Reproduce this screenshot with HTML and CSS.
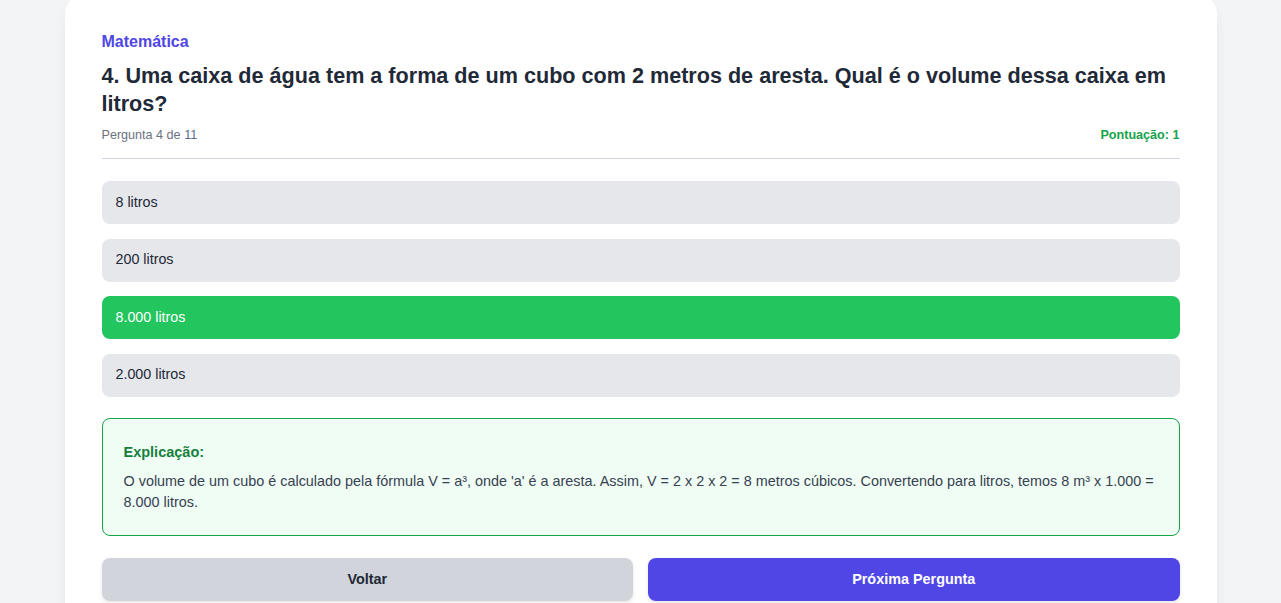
FILE: index.html
```html
<!DOCTYPE html>
<html lang="pt">
<head>
<meta charset="utf-8">
<title>Quiz</title>
<link rel="stylesheet" href="styles.css">
</head>
<body>
<main class="page">
  <section class="card">
    <div class="subject">Matemática</div>
    <h1 class="question">4. Uma caixa de água tem a forma de um cubo com 2 metros de aresta. Qual é o volume dessa caixa em litros?</h1>
    <div class="meta">
      <span class="progress">Pergunta 4 de <span class="total">11</span></span>
      <span class="score">Pontuação: 1</span>
    </div>
    <div class="options">
      <button class="option">8 litros</button>
      <button class="option">200 litros</button>
      <button class="option option-correct">8.000 litros</button>
      <button class="option">2.000 litros</button>
    </div>
    <div class="explanation">
      <h2 class="explanation-title">Explicação:</h2>
      <p class="explanation-text">O volume de um cubo é calculado pela fórmula V = a³, onde 'a' é a aresta. Assim, V = 2 x 2 x 2 = 8 metros cúbicos. Convertendo para litros, temos 8 m³ x 1.000 = 8.000 litros.</p>
    </div>
    <div class="actions">
      <button class="btn btn-back">Voltar</button>
      <button class="btn btn-next">Próxima Pergunta</button>
    </div>
  </section>
</main>
</body>
</html>
```

FILE: styles.css
```css
* { box-sizing: border-box; }
html, body { margin: 0; padding: 0; }
body {
  background: #f3f4f6;
  font-family: "Liberation Sans", Arial, sans-serif;
  color: #1f2937;
  overflow: hidden;
}
.page {
  display: flex;
  justify-content: center;
}
.card {
  width: 1152px;
  margin-top: -6px;
  background: #ffffff;
  border-radius: 20px;
  box-shadow: 0 10px 15px -3px rgba(0,0,0,0.08), 0 4px 6px -4px rgba(0,0,0,0.08);
  padding: 36px 37px 40px 37px;
  min-height: 700px;
}
.subject {
  font-size: 16px;
  line-height: 24px;
  font-weight: 700;
  color: #4f46e5;
}
.question {
  margin: 8px 0 0 0;
  font-size: 21.6px;
  line-height: 28px;
  font-weight: 700;
  color: #1f2937;
}
.meta {
  margin-top: 7px;
  display: flex;
  justify-content: space-between;
  align-items: center;
  font-size: 12.6px;
  line-height: 20px;
  padding-bottom: 13px;
  border-bottom: 1px solid #d1d5db;
}
.progress { color: #6b7280; }
.total { color: #5b6b8c; }
.score { color: #16a34a; font-weight: 700; }
.options {
  margin-top: 22px;
  display: flex;
  flex-direction: column;
  gap: 14.6px;
}
.option {
  display: block;
  width: 100%;
  height: 43px;
  border: none;
  border-radius: 8px;
  background: #e5e7eb;
  color: #1f2937;
  font-family: inherit;
  font-size: 14.3px;
  text-align: left;
  padding: 0 14px 2px 14px;
}
.option-correct {
  background: #22c55e;
  color: #ffffff;
}
.explanation {
  margin-top: 21.5px;
  border: 1px solid #16a34a;
  border-radius: 8px;
  background: #f0fdf4;
  padding: 21px 21px 22px 21px;
}
.explanation-title {
  margin: 0 0 7px 0;
  font-size: 14.5px;
  line-height: 24px;
  font-weight: 700;
  color: #15803d;
}
.explanation-text {
  margin: 0;
  font-size: 14.4px;
  line-height: 21px;
  color: #374151;
}
.actions {
  margin-top: 21.5px;
  display: flex;
  gap: 15px;
}
.btn {
  flex: 1;
  height: 43px;
  border: none;
  border-radius: 8px;
  font-family: inherit;
  font-size: 14.4px;
  font-weight: 700;
  box-shadow: 0 2px 4px rgba(0,0,0,0.1);
}
.btn-back { background: #d1d5db; color: #1f2937; }
.btn-next { background: #4f46e5; color: #ffffff; }
```
